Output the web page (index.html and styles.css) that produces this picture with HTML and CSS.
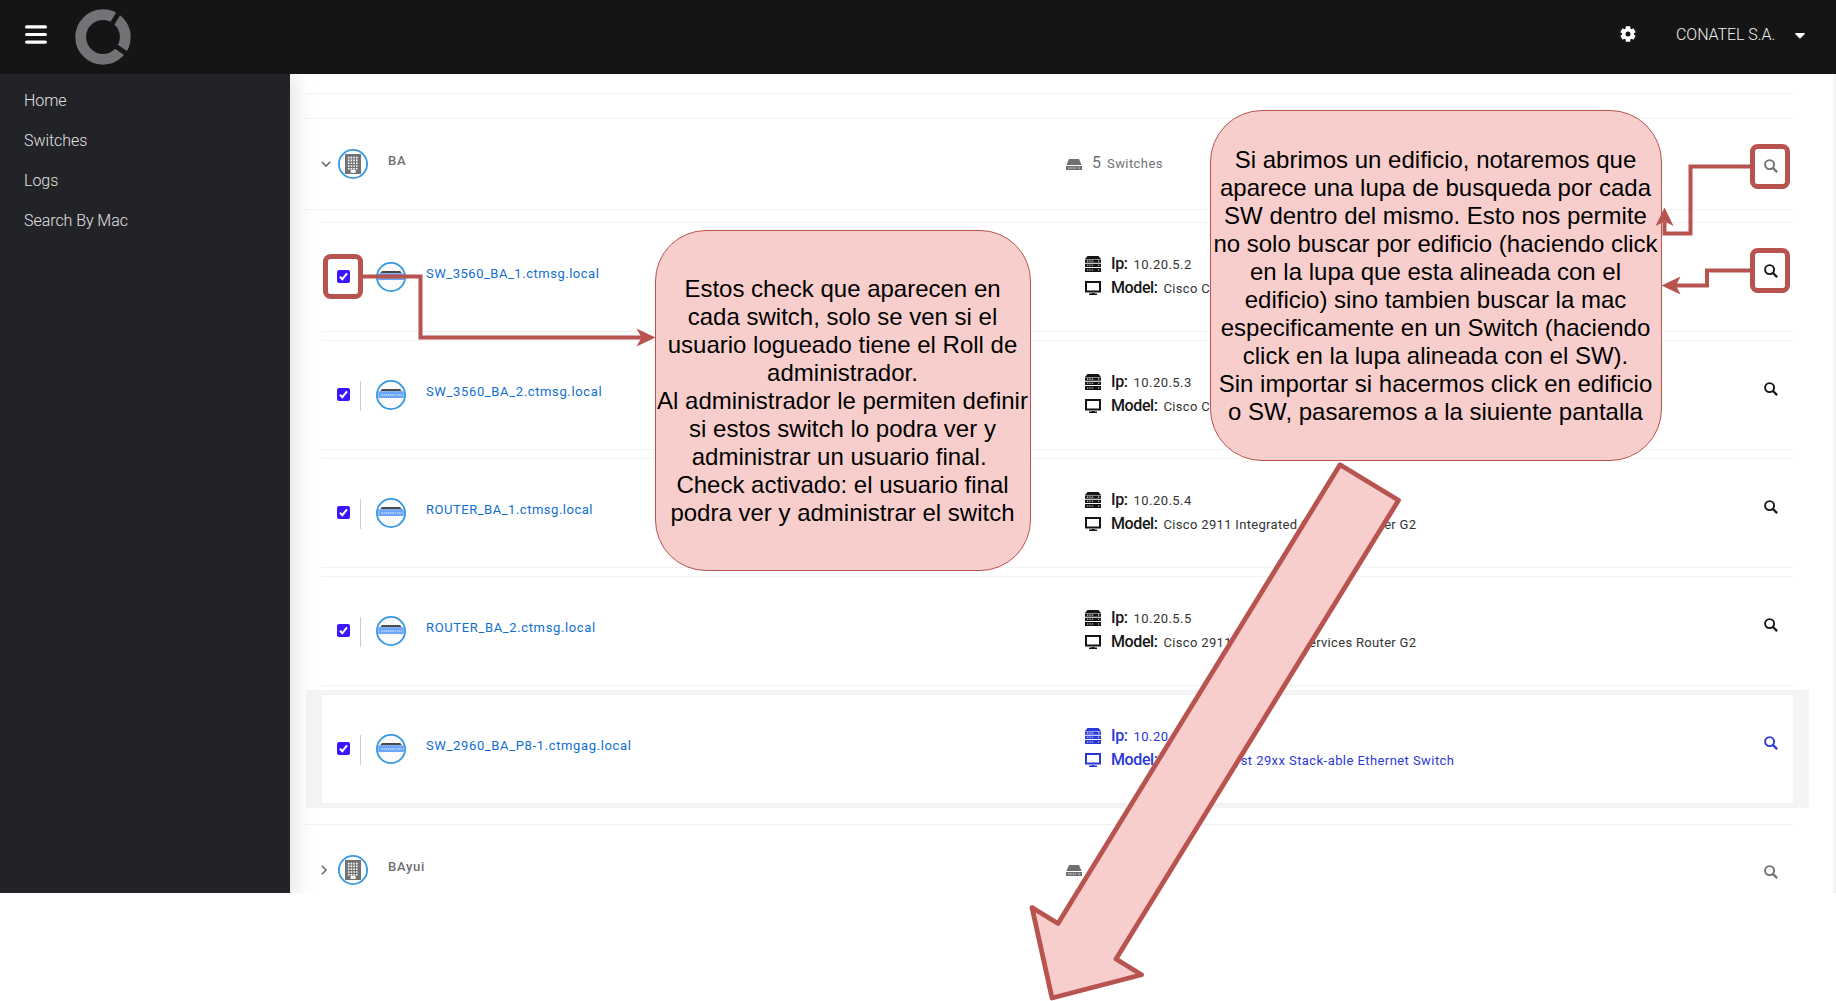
FILE: index.html
```
<!DOCTYPE html>
<html lang="es">
<head>
<meta charset="utf-8">
<title>Switches</title>
<link rel="stylesheet" href="styles.css">
</head>
<body>
<svg class="defs" aria-hidden="true">
  <symbol id="lupa" viewBox="0 0 14 14"><circle cx="5.6" cy="5.6" r="4.5" fill="none" stroke="currentColor" stroke-width="1.9"/><path d="M8.7 8.7 L13.1 13.1" stroke="currentColor" stroke-width="2.3" fill="none"/></symbol>
  <symbol id="drive" viewBox="0 0 16 11"><path fill="currentColor" d="M3 0h10l2.6 6H.4zM0 6.9h16V11H0z"/><path stroke="#fff" stroke-width="1" stroke-dasharray="1.4 .9" d="M2 9h8M12.5 9h1.8" opacity=".85"/></symbol>
  <symbol id="server" viewBox="0 0 16 16"><path fill="currentColor" d="M2.5 0h11L16 3H0zM0 3.6h16v3.1H0zM0 7.8h16v3.1H0zM0 12h16v4H0z"/><path stroke="#fff" stroke-width="1.1" stroke-dasharray="1.3 1" d="M2 5.1h7M2 9.3h7M2 14h7M13 5.1h1.4M13 9.3h1.4M13 14h1.4" opacity=".85"/></symbol>
  <symbol id="screen" viewBox="0 0 16 14"><path fill="currentColor" fill-rule="evenodd" d="M0 0h16v11.5H0zM2 2v7.5h12V2zM6.5 11h3v1.5H12V14H4v-1.5h2.5z"/></symbol>
  <symbol id="tower" viewBox="0 0 30 30"><circle cx="15" cy="15" r="14.1" fill="#fff" stroke="#3498e3" stroke-width="1.8"/><path fill="#717274" d="M7 5h16v20H7z"/><path fill="none" stroke="#fff" stroke-width="1.6" stroke-dasharray="1.6 1.1" d="M9.9 8.6h10.2M9.9 11.4h10.2M9.9 14.2h10.2M9.9 17h10.2M9.9 19.8h10.2"/><path fill="#fff" d="M12.6 20.8h5v3.1h-5z"/></symbol>
  <symbol id="switch" viewBox="0 0 30 30"><circle cx="15" cy="15" r="14.1" fill="#fbfbfb" stroke="#3498e3" stroke-width="1.8"/><path fill="#4a4a4a" d="M6 9h18l2 2.3H4z"/><path fill="#69a5fb" d="M2.3 11.3h25.4V18H2.3z"/><path stroke="#d4e5ff" stroke-width="1.5" stroke-dasharray="1.3 .9" d="M5.5 15h14M21 15h5"/></symbol>
</svg>

<div class="app">
  <header class="topbar">
    <svg class="burger" width="22" height="20" viewBox="0 0 22 20"><path d="M1.6 1.9h18.8M1.6 9.5h18.8M1.6 17.1h18.8" stroke="#fff" stroke-width="3.2" stroke-linecap="round"/></svg>
    <svg class="brand" width="56" height="56" viewBox="0 0 56 56"><circle cx="28" cy="28" r="22.3" fill="none" stroke="#737277" stroke-width="10.8"/><path d="M36 16.5 L44 3.5M41 37.5 L52 45" stroke="#151515" stroke-width="4.8"/></svg>
    <svg class="gear" width="16" height="16" viewBox="0 0 16 16"><g stroke="#fff" stroke-width="4.6"><path d="M8 .3v15.4M1.4 4.2l13.2 7.6M1.4 11.8l13.2-7.6"/></g><circle cx="8" cy="8" r="6" fill="#fff"/><circle cx="8" cy="8" r="2.5" fill="#151515"/></svg>
    <span class="account">CONATEL S.A.</span>
    <svg class="caret" width="10" height="6" viewBox="0 0 10 6"><path fill="#fff" d="M.6 0h8.8c.5 0 .7.6.3 1L5.6 5.3c-.4.3-.8.3-1.2 0L.3 1C-.1.6.1 0 .6 0z"/></svg>
  </header>

  <div class="main">
    <nav class="sidebar">
      <a>Home</a><a>Switches</a><a>Logs</a><a>Search By Mac</a>
    </nav>

    <section class="content">
      <div class="previous"></div>

      <div class="building">
        <svg class="chevron" width="10" height="10" viewBox="0 0 10 10"><path d="M.8 2.8 L5 7 L9.2 2.8"/></svg>
        <svg class="disc" width="30" height="30"><use href="#tower"/></svg>
        <span class="building-name">BA</span>
        <span class="count"><svg width="16" height="11"><use href="#drive"/></svg><b>5</b><span>Switches</span></span>
        <svg class="search" width="14" height="14"><use href="#lupa"/></svg>
      </div>

      <div class="switches">
        <div class="row"><div class="row-inner">
          <span class="check"><svg width="13" height="13" viewBox="0 0 13 13"><path d="M3 6.8 L5.3 9.2 L10 3.4"/></svg></span><i class="bar"></i>
          <svg class="disc" width="30" height="30"><use href="#switch"/></svg>
          <a class="name">SW_3560_BA_1.ctmsg.local</a>
          <div class="info"><p><svg width="16" height="16"><use href="#server"/></svg><b>Ip:</b><span class="ip">10.20.5.2</span></p><p><svg width="16" height="14"><use href="#screen"/></svg><b>Model:</b><span>Cisco C</span></p></div>
          <svg class="search" width="14" height="14"><use href="#lupa"/></svg>
        </div></div>
        <div class="row"><div class="row-inner">
          <span class="check"><svg width="13" height="13" viewBox="0 0 13 13"><path d="M3 6.8 L5.3 9.2 L10 3.4"/></svg></span><i class="bar"></i>
          <svg class="disc" width="30" height="30"><use href="#switch"/></svg>
          <a class="name wide">SW_3560_BA_2.ctmsg.local</a>
          <div class="info"><p><svg width="16" height="16"><use href="#server"/></svg><b>Ip:</b><span class="ip">10.20.5.3</span></p><p><svg width="16" height="14"><use href="#screen"/></svg><b>Model:</b><span>Cisco C</span></p></div>
          <svg class="search" width="14" height="14"><use href="#lupa"/></svg>
        </div></div>
        <div class="row"><div class="row-inner">
          <span class="check"><svg width="13" height="13" viewBox="0 0 13 13"><path d="M3 6.8 L5.3 9.2 L10 3.4"/></svg></span><i class="bar"></i>
          <svg class="disc" width="30" height="30"><use href="#switch"/></svg>
          <a class="name">ROUTER_BA_1.ctmsg.local</a>
          <div class="info"><p><svg width="16" height="16"><use href="#server"/></svg><b>Ip:</b><span class="ip">10.20.5.4</span></p><p><svg width="16" height="14"><use href="#screen"/></svg><b>Model:</b><span>Cisco 2911 Integrated Services Router G2</span></p></div>
          <svg class="search" width="14" height="14"><use href="#lupa"/></svg>
        </div></div>
        <div class="row"><div class="row-inner">
          <span class="check"><svg width="13" height="13" viewBox="0 0 13 13"><path d="M3 6.8 L5.3 9.2 L10 3.4"/></svg></span><i class="bar"></i>
          <svg class="disc" width="30" height="30"><use href="#switch"/></svg>
          <a class="name wide">ROUTER_BA_2.ctmsg.local</a>
          <div class="info"><p><svg width="16" height="16"><use href="#server"/></svg><b>Ip:</b><span class="ip">10.20.5.5</span></p><p><svg width="16" height="14"><use href="#screen"/></svg><b>Model:</b><span>Cisco 2911 Integrated Services Router G2</span></p></div>
          <svg class="search" width="14" height="14"><use href="#lupa"/></svg>
        </div></div>
        <div class="row hover"><div class="row-inner">
          <span class="check"><svg width="13" height="13" viewBox="0 0 13 13"><path d="M3 6.8 L5.3 9.2 L10 3.4"/></svg></span><i class="bar"></i>
          <svg class="disc" width="30" height="30"><use href="#switch"/></svg>
          <a class="name wide">SW_2960_BA_P8-1.ctmgag.local</a>
          <div class="info"><p><svg width="16" height="16"><use href="#server"/></svg><b>Ip:</b><span class="ip">10.20.5.6</span></p><p><svg width="16" height="14"><use href="#screen"/></svg><b>Model:</b><span class="model">Cisco Catalyst 29xx Stack-able Ethernet Switch</span></p></div>
          <svg class="search" width="14" height="14"><use href="#lupa"/></svg>
        </div></div>
      </div>

      <div class="building closed">
        <svg class="chevron" width="10" height="10" viewBox="0 0 10 10"><path d="M2.8 .8 L7 5 L2.8 9.2"/></svg>
        <svg class="disc" width="30" height="30"><use href="#tower"/></svg>
        <span class="building-name">BAyui</span>
        <span class="count"><svg width="16" height="11"><use href="#drive"/></svg><b>1</b><span>Switches</span></span>
        <svg class="search" width="14" height="14"><use href="#lupa"/></svg>
      </div>
    </section>
  </div>
</div>

<div class="note note-check">Estos check que aparecen en<br>cada switch, solo se ven si el<br>usuario logueado tiene el Roll de<br>administrador.<br>Al administrador le permiten definir<br>si estos switch lo podra ver y<br>administrar un usuario final.&nbsp;<br>Check activado: el usuario final<br>podra ver y administrar el switch</div>
<div class="note note-search">Si abrimos un edificio, notaremos que<br>aparece una lupa de busqueda por cada<br>SW dentro del mismo. Esto nos permite<br>no solo buscar por edificio (haciendo click<br>en la lupa que esta alineada con el<br>edificio) sino tambien buscar la mac<br>especificamente en un Switch (haciendo<br>click en la lupa alineada con el SW).<br>Sin importar si hacermos click en edificio<br>o SW, pasaremos a la siuiente pantalla</div>

<svg class="arrows" width="1836" height="1001" viewBox="0 0 1836 1001">
  <g fill="none" stroke="#b85450">
    <g stroke-width="5">
      <rect x="325.5" y="256.5" width="35" height="40" rx="5"/>
      <rect x="1752.5" y="146.5" width="35" height="40" rx="5"/>
      <rect x="1752.5" y="250.5" width="35" height="40" rx="5"/>
    </g>
    <g stroke-width="4">
      <path d="M363 276.5H420.5V337.5H642"/>
      <path d="M1750 166.5H1690.5V233.5H1664.5V222"/>
      <path d="M1750 270.5H1707V285.5H1676"/>
    </g>
  </g>
  <g fill="#b85450">
    <path d="M655.5 337.5L636.5 346.5L641.5 337.5L636.5 328.5z"/>
    <path d="M1664.5 207.5L1673.5 226L1664.5 221.5L1655.5 226z"/>
    <path d="M1661.5 285.5L1680.5 276.5L1676 285.5L1680.5 294.5z"/>
  </g>
  <path fill="#f8cecc" stroke="#b85450" stroke-width="4.8" stroke-linejoin="round" d="M1340 464.8L1398.5 500.3L1116 959L1141.5 974.8L1052 998L1032 907.5L1058 923.5z"/>
</svg>
</body>
</html>
```
FILE: styles.css
```
* { box-sizing: border-box; }
body { margin: 0; width: 1836px; height: 1001px; overflow: hidden; background: #fff; font-family: Roboto, sans-serif; color: #151515; position: relative; }
svg { display: block; flex: none; }
.defs { position: absolute; width: 0; height: 0; }

.app { height: 893px; overflow: hidden; display: flex; flex-direction: column; }
.topbar { height: 74px; flex: none; background: #151515; display: flex; align-items: center; position: relative; z-index: 2; padding: 0 31px 0 25px; }
.burger { margin-bottom: 5px; }
.brand { margin-left: 28px; width: 56px; }
.gear { margin-left: auto; margin-bottom: 6px; }
.account { width: 99px; margin: 0 20px 5px 40px; font-size: 16px; font-weight: 300; letter-spacing: -.05px; color: #f0f0f0; white-space: nowrap; }
.caret { margin-bottom: 2px; }

.main { flex: 1; display: flex; min-height: 0; }
.sidebar { width: 290px; flex: none; background: #222327; padding-top: 7px; box-shadow: 0 4px 22px 2px rgba(0,0,0,.15); position: relative; z-index: 1; display: flex; flex-direction: column; }
.sidebar a { height: 40px; padding-left: 24px; line-height: 40px; font-size: 16px; font-weight: 300; letter-spacing: -.05px; color: #e2e2e2; }

.content { flex: 1; min-width: 0; border-right: 3px solid #f4f4f4; overflow: hidden; }
.previous { height: 20px; margin: 0 40px 24px 16px; border-bottom: 1px solid #f2f2f2; }
.building { height: 92px; margin: 0 40px 8px 16px; padding: 0 15px; border: solid #f2f2f2; border-width: 1px 0; display: flex; align-items: center; color: #6f7073; }
.building.closed { margin-top: 16px; }
.chevron { fill: none; stroke: #6a6a6a; stroke-width: 1.6; }
.building .disc { margin-left: 7px; }
.building-name { width: 678px; margin: 0 0 7px 20px; font-size: 13px; font-weight: 500; letter-spacing: .7px; }
.closed .chevron { margin-left: -2px; }
.closed .disc { margin-left: 9px; }
.count { display: flex; align-items: center; }
.count b { margin: -3px 6px 0 10px; font-size: 16px; font-weight: 400; width: 9px; }
.count span { font-size: 13px; letter-spacing: .42px; margin-top: -1px; }
.building .search { margin: 4px 0 0 auto; }

.row { height: 118px; padding: 4px 24px 4px 16px; margin: 0 24px 0 16px; }
.row-inner { height: 110px; margin-right: -8px; border: solid #f2f2f2; border-width: 1px 0; background: #fff; display: flex; align-items: center; padding: 0 15px; }
.row.hover { background: #f4f4f4; }
.check { width: 13px; height: 13px; border-radius: 2px; background: #3b16ff; margin-bottom: 1px; flex: none; }
.check path { fill: none; stroke: #fff; stroke-width: 2; }
.bar { width: 1px; height: 30px; margin: 2px 0 0 10px; background: #ccc; }
.row .disc { margin-left: 15px; }
.name { width: 659px; margin: 0 0 7px 20px; font-size: 13px; font-weight: 400; letter-spacing: .52px; color: #0f6fd0; }
.name.wide { letter-spacing: .64px; }
.info { padding-bottom: 2px; }
.info p { margin: 0; height: 24px; display: flex; align-items: center; white-space: nowrap; }
.info b { margin: -1px 6px 0 10px; font-size: 16px; font-weight: 500; letter-spacing: -.4px; }
.info span { font-size: 13px; letter-spacing: .32px; padding-top: 1px; color: #333; }
.info .ip { letter-spacing: .45px; }
.info .model { letter-spacing: .43px; }
.row .search { margin: 0 0 12px auto; }
.hover .info, .hover .info span, .hover .search { color: #2b38d8; }

/* Annotation layer over the application */
.note { position: absolute; display: grid; place-content: center; text-align: center; white-space: nowrap; background: #f8cecc; border: 1px solid #b85450; border-radius: 52px; color: #000; font: 24px/28px "Liberation Sans", sans-serif; }
.note-check { left: 655px; top: 230px; width: 376px; height: 341px; padding-right: 1px; border-radius: 51px; }
.note-search { left: 1210px; top: 110px; width: 452px; height: 351px; padding-right: 1px; }
.arrows { position: absolute; left: 0; top: 0; }
```
